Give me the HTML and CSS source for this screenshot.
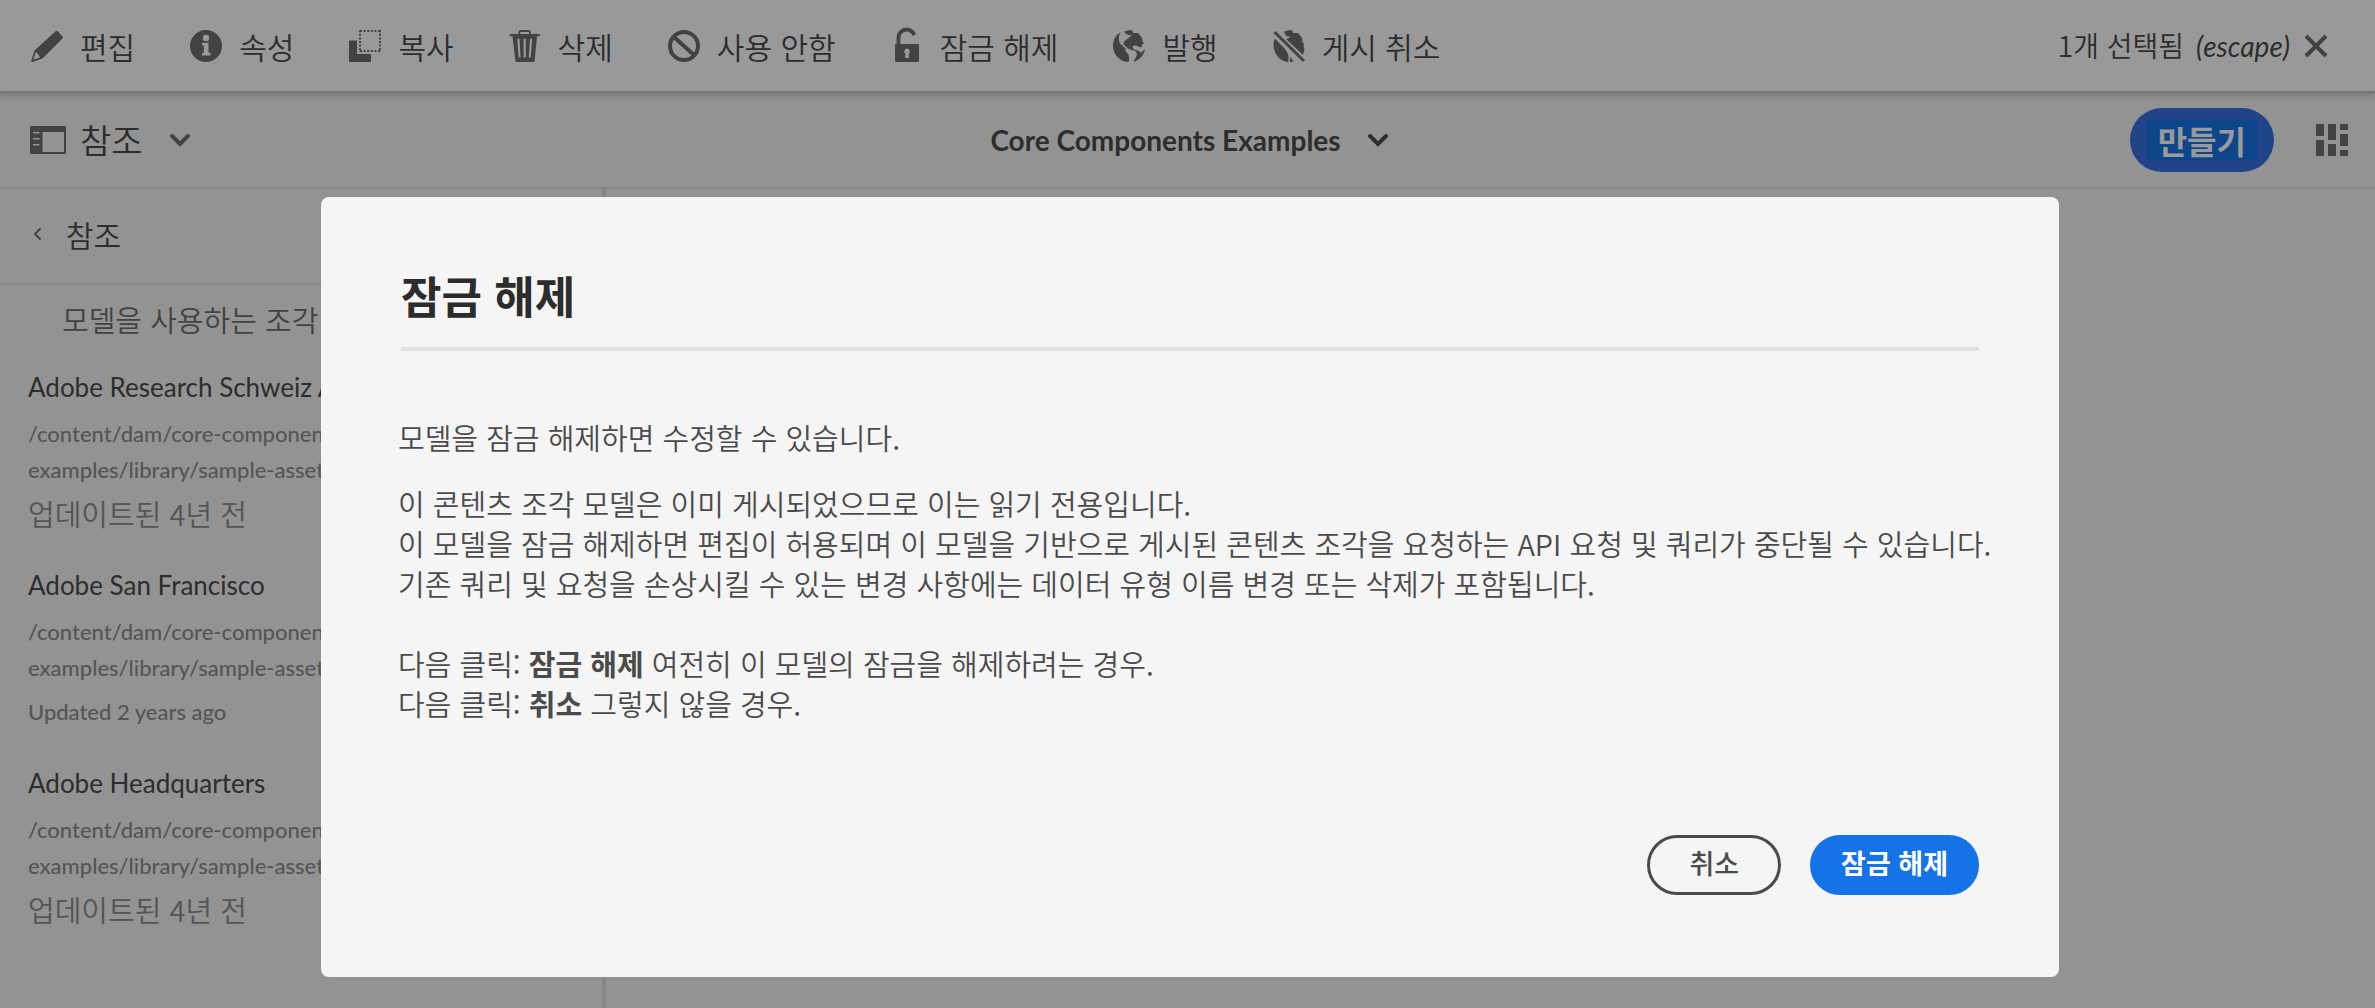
FILE: index.html
```html
<!DOCTYPE html>
<html lang="ko">
<head>
<meta charset="utf-8">
<meta name="viewport" content="width=device-width, initial-scale=1">
<title>Core Components Examples</title>
<link rel="stylesheet" href="styles.css">
</head>
<body>
<header class="actionbar">
  <div class="actions">
    <button class="action" type="button"><svg class="icon" viewBox="0 0 32 32"><path d="M24.600 1.200a1.600 1.600 0 0 1 2.200 0l4.700 5.200a1.600 1.600 0 0 1 0 2.200L11.500 28.500 1.500 32Q0 32.200.200 30.800L3.500 20.500ZM5 21.800 2.300 29.800 9.200 27.200Z" fill-rule="evenodd"/></svg>편집</button>
    <button class="action" type="button"><svg class="icon" viewBox="0 0 32 32"><path fill-rule="evenodd" d="M16 0a16 16 0 1 1 0 32a16 16 0 1 1 0-32ZM16 4.700a3.200 3.200 0 1 0 0 6.400a3.200 3.200 0 1 0 0-6.400ZM12 12.700v2.800h1.800v7.200H12v2.900h8.400v-2.900h-1.900V12.700Z"/></svg>속성</button>
    <button class="action" type="button"><svg class="icon" viewBox="0 0 32 32"><path d="M1 10.500h7V24h14v7a1 1 0 0 1-1 1H1a1 1 0 0 1-1-1V11.500a1 1 0 0 1 1-1Z"/><path d="M11 1.100h21M11 21h21M11 .200V22M31 .200V22" fill="none" stroke="currentColor" stroke-width="2" stroke-dasharray="2 1.600"/></svg>복사</button>
    <button class="action" type="button"><svg class="icon" viewBox="0 0 32 32"><path fill="none" stroke="currentColor" stroke-width="1.800" d="M10.300 4.500V2.200Q10.300 1 11.500 1h8Q21 1 21 2.200v2.300"/><path fill-rule="evenodd" d="M1.500 4H30q1 0 1 1.200T30 6.200h-2L25.600 31q-.200 1-1.400 1H7.800q-1.200 0-1.400-1L3.500 6.200h-2Q.500 6.200.500 5.200T1.500 4ZM8.300 8.800 9.600 27.500h2L10.500 8.800ZM14.600 8.800V27.500h2.200V8.800ZM21 8.800 19.700 27.500h2L23.200 8.800Z"/></svg>삭제</button>
    <button class="action" type="button"><svg class="icon" viewBox="0 0 32 32"><g fill="none" stroke="currentColor" stroke-width="4"><circle cx="16" cy="16" r="14"/><path d="M6 7 26 25"/></g></svg>사용 안함</button>
    <button class="action" type="button"><svg class="icon" viewBox="0 0 32 32"><path d="M7.500 15V7.500a8 8 0 0 1 8-8q5 0 8 5.500" fill="none" stroke="currentColor" stroke-width="3.800"/><path fill-rule="evenodd" d="M5 14h22q1 0 1 1v16q0 1-1 1H5q-1 0-1-1V15q0-1 1-1ZM16 18.500a3 3 0 0 0-1.600 5.400L14 28h4l-.400-4.100A3 3 0 0 0 16 18.500Z"/></svg>잠금 해제</button>
    <button class="action" type="button"><svg class="icon" viewBox="0 0 32 32"><path d="M7.500 2.500C3 4.500 0 10 0 16c0 8.500 7 16 15.500 16 1.500-3 .300-6-.200-8-2-1.200-3.300-3-2.800-5.500-2-2-4-3.300-5.700-5.200-1.500-3.300-1.300-7.300.700-10.800Z"/><path d="M11 1.500 17 0l2.500.500.500 2.500L25 3l4 5 .500 4 2 1-2.500 1.500-.500 3-4-1.200-2-1-3 1 1 3 6 2 1.500 1.500L32 19c-1 6-5 11-11.500 12.700L24 25l-1-3.500-8-3-4.500-4 .500-3 5-4 3-2-4-.500-3-2Z"/></svg>발행</button>
    <button class="action" type="button"><svg class="icon" viewBox="0 0 32 32"><path d="M2 8.500C0 12 .300 17 1.500 20.500 4 28 9.500 31.500 15 32q1.300-4 0-8l-2.500-4.500ZM17.500 27l3 4.600-4 .400ZM11 1.500 17 0l2.500.500.500 2.500L25 3l4 5 .500 4 1.500 2-.5 2 1 3-1.500 6-17-16 3-1 1-1.500-4-.500Z"/><path d="M1.500 2 31 31" stroke="currentColor" stroke-width="3" fill="none"/></svg>게시 취소</button>
  </div>
  <button class="action selection" type="button"><span>1개 선택됨 <em>(escape)</em></span><svg class="icon-close" viewBox="0 0 24 24"><path d="M2 2 22 22M22 2 2 22" fill="none" stroke="currentColor" stroke-width="4"/></svg></button>
</header>

<nav class="subbar">
  <button class="rail-toggle" type="button"><svg class="icon-rail" viewBox="0 0 36 28"><path fill-rule="evenodd" d="M1 0h34q1 0 1 1v26q0 1-1 1H1q-1 0-1-1V1Q0 0 1 0ZM12.500 6V26H34V6ZM3 6v1.600h6.500V6ZM3 12v1.600h6.500V12ZM3 18v1.600h6.500V18Z"/></svg>참조<svg class="chevron" viewBox="0 0 20 12"><path d="M2 2 10 10 18 2"/></svg></button>
  <button class="breadcrumb" type="button">Core Components Examples<svg class="chevron" viewBox="0 0 20 12"><path d="M2 2 10 10 18 2"/></svg></button>
  <div class="subbar-end">
    <button class="create" type="button"><span>만들기</span></button>
    <button class="view-switch" type="button" aria-label="보기"><svg class="icon" viewBox="0 0 32 32"><path d="M0 0h8v12H0ZM0 16h8v16H0ZM12 0h8v16h-8ZM12 20h8v12h-8ZM24 0h8v6h-8ZM24 10h8v12h-8ZM24 26h8v6h-8Z"/></svg></button>
  </div>
</nav>

<div class="workspace">
  <aside class="rail">
    <button class="rail-head" type="button"><svg class="back" viewBox="0 0 8 12"><path d="M7 1 2 6 7 11"/></svg>참조</button>
    <h2 class="rail-group">모델을 사용하는 조각</h2>
    <ul class="refs">
      <li><h3>Adobe Research Schweiz AG</h3><p class="path">/content/dam/core-components-<br>examples/library/sample-assets</p><p class="updated-ko">업데이트된 4년 전</p></li>
      <li><h3>Adobe San Francisco</h3><p class="path">/content/dam/core-components-<br>examples/library/sample-assets</p><p class="updated">Updated 2 years ago</p></li>
      <li><h3>Adobe Headquarters</h3><p class="path">/content/dam/core-components-<br>examples/library/sample-assets</p><p class="updated-ko">업데이트된 4년 전</p></li>
    </ul>
  </aside>
  <main class="content"></main>
</div>

<div class="backdrop">
  <section class="dialog" role="dialog" aria-modal="true" aria-labelledby="dialog-title">
    <h1 class="dialog-title" id="dialog-title">잠금 해제</h1>
    <div class="dialog-body">
      <p>모델을 잠금 해제하면 수정할 수 있습니다.</p>
      <p>이 콘텐츠 조각 모델은 이미 게시되었으므로 이는 읽기 전용입니다.<br>이 모델을 잠금 해제하면 편집이 허용되며 이 모델을 기반으로 게시된 콘텐츠 조각을 요청하는 API 요청 및 쿼리가 중단될 수 있습니다.<br>기존 쿼리 및 요청을 손상시킬 수 있는 변경 사항에는 데이터 유형 이름 변경 또는 삭제가 포함됩니다.<br><br>다음 클릭: <strong>잠금 해제</strong> 여전히 이 모델의 잠금을 해제하려는 경우.<br>다음 클릭: <strong>취소</strong> 그렇지 않을 경우.</p>
    </div>
    <footer class="dialog-footer">
      <button class="btn btn-outline" type="button">취소</button>
      <button class="btn btn-primary" type="button">잠금 해제</button>
    </footer>
  </section>
</div>
</body>
</html>
```
FILE: styles.css
```css
* {
  box-sizing: border-box;
}

body {
  margin: 0;
  min-height: 100vh;
  display: flex;
  flex-direction: column;
  overflow: hidden;
  background: #f5f5f5;
  color: #4b4b4b;
  font-family: "Noto Sans CJK KR", "Noto Sans", sans-serif;
  font-weight: 350;
}

h1, h2, h3, p, ul {
  margin: 0;
  padding: 0;
  font-weight: inherit;
}

button {
  padding: 0;
  border: 0;
  background: none;
  color: inherit;
  font: inherit;
  white-space: nowrap;
  cursor: pointer;
}

svg {
  flex: none;
  overflow: visible;
  color: #6e6e6e;
  fill: currentColor;
}

.icon {
  width: 32px;
  height: 32px;
}

/* Selection toolbar */
.actionbar {
  position: relative;
  z-index: 1;
  display: flex;
  justify-content: space-between;
  height: 91px;
  padding: 0 47px 0 31px;
  background: #fff;
  box-shadow: 0 2px 0 #c6c6c6, 0 3px 8px 1px rgba(0, 0, 0, 0.2);
}

.actions {
  display: flex;
  gap: 55px;
}

.action {
  display: flex;
  align-items: center;
  gap: 17px;
  font-size: 30px;
  line-height: 40px;
}

.selection {
  gap: 14px;
  font-size: 28px;
}

.selection em {
  padding-left: 4px;
  font-family: "Lato", sans-serif;
  font-weight: 400;
  font-size: 28px;
}

.icon-close {
  width: 24px;
  height: 24px;
}

/* Title bar */
.subbar {
  display: grid;
  grid-template-columns: 1fr auto 1fr;
  align-items: center;
  height: 98px;
  padding: 2px 27px 0 30px;
  border-bottom: 2px solid #e1e1e1;
}

.rail-toggle {
  display: flex;
  align-items: center;
  justify-self: start;
  font-size: 34px;
  line-height: 40px;
}

.icon-rail {
  width: 36px;
  height: 28px;
  margin-right: 14px;
}

.chevron {
  width: 20px;
  height: 12px;
  margin-left: 27px;
}

.chevron path,
.back path {
  fill: none;
  stroke: currentColor;
  stroke-width: 4;
  stroke-linecap: round;
}

.breadcrumb {
  display: flex;
  align-items: center;
  font-family: "Lato", sans-serif;
  font-size: 28px;
  font-weight: 700;
  line-height: 40px;
}

.breadcrumb .chevron {
  color: #4b4b4b;
}

.subbar-end {
  display: flex;
  align-items: center;
  justify-self: end;
  gap: 42px;
}

.create {
  padding: 12px 17px;
  border-radius: 32px;
  background: #3871e3;
  color: #fff;
  font-size: 32px;
  font-weight: 700;
  line-height: 40px;
}

.create span {
  display: block;
  padding: 0 11px;
  background: #1473e6;
}

.view-switch {
  display: flex;
}

/* References rail */
.workspace {
  display: flex;
  flex: 1;
}

.rail {
  width: 606px;
  border-right: 4px solid #e1e1e1;
}

.rail-head {
  display: flex;
  align-items: center;
  gap: 25px;
  width: 100%;
  height: 96px;
  padding: 0 0 4px 33px;
  border-bottom: 2px solid #e1e1e1;
  font-size: 30px;
  line-height: 40px;
}

.back {
  width: 8px;
  height: 12px;
}

.back path {
  stroke-width: 2;
}

.rail-group {
  padding: 14px 0 0 62px;
  color: #6e6e6e;
  font-size: 29px;
  line-height: 40px;
}

.refs {
  padding: 28px 0 0 28px;
  list-style: none;
}

.refs li {
  height: 198px;
}

.refs h3 {
  padding-bottom: 9px;
  font-family: "Lato", sans-serif;
  font-size: 26px;
  font-weight: 400;
  line-height: 40px;
}

.path,
.updated {
  color: #8e8e8e;
  font-family: "Lato", sans-serif;
  font-size: 22px;
  font-weight: 500;
  line-height: 36px;
}

.updated {
  padding-top: 8px;
}

.updated-ko {
  padding-top: 5px;
  color: #8e8e8e;
  font-size: 29px;
  line-height: 40px;
}

.content {
  flex: 1;
}

/* Modal dialog */
.backdrop {
  position: fixed;
  inset: 0;
  z-index: 2;
  padding: 197px 316px 0 321px;
  background: rgba(0, 0, 0, 0.4);
}

.dialog {
  padding: 68px 80px 82px;
  border-radius: 8px;
  background: #f5f5f5;
}

.dialog-title {
  padding-bottom: 22px;
  border-bottom: 4px solid #e1e1e1;
  color: #2c2c2c;
  font-size: 44px;
  font-weight: 700;
  line-height: 60px;
}

.dialog-body {
  margin: 0 -3px;
  padding-top: 66px;
  font-size: 29px;
  line-height: 40px;
  white-space: nowrap;
}

.dialog-body p + p {
  padding-top: 26px;
}

.dialog-body strong {
  font-weight: 700;
}

.dialog-footer {
  display: flex;
  justify-content: flex-end;
  gap: 29px;
  padding-top: 112px;
}

.btn {
  padding: 5px 28px 9px;
  border: 3px solid #1473e6;
  border-radius: 30px;
  font-size: 27px;
  font-weight: 700;
  line-height: 40px;
}

.btn-outline {
  padding: 5px 39px 9px;
  border-color: #4b4b4b;
  font-weight: 500;
}

.btn-primary {
  background: #1473e6;
  color: #fff;
}
```
